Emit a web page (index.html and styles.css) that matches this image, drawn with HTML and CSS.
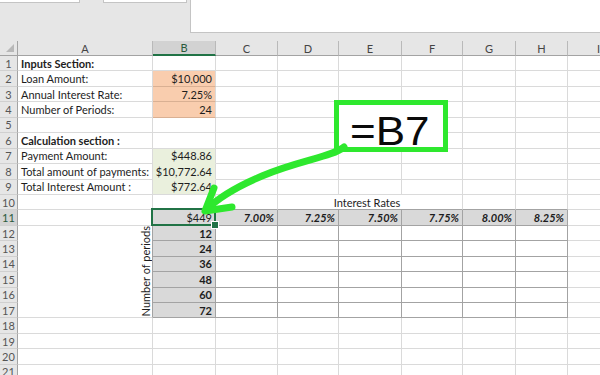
FILE: index.html
```html
<!DOCTYPE html>
<html>
<head>
<meta charset="utf-8">
<link rel="stylesheet" href="styles.css">
</head>
<body>
<div class="top">
  <div class="tools"><div class="box name"></div><div class="box fx"></div></div>
  <div class="formula"></div>
</div>
<div class="sheet">
  <div class="c h corner"><svg width="10" height="10" viewBox="0 0 10 10"><polygon points="9,1 9,9 1,9" fill="#b8b8b8"/></svg></div>
  <div class="c h">A</div><div class="c h hs">B</div><div class="c h">C</div><div class="c h">D</div><div class="c h">E</div><div class="c h">F</div><div class="c h">G</div><div class="c h">H</div><div class="c h">I</div>

  <div class="c r">1</div><div class="c b">Inputs Section:</div><div class="c"></div><div class="c"></div><div class="c"></div><div class="c"></div><div class="c"></div><div class="c"></div><div class="c"></div><div class="c"></div>
  <div class="c r">2</div><div class="c">Loan Amount:</div><div class="c n o">$10,000</div><div class="c"></div><div class="c"></div><div class="c"></div><div class="c"></div><div class="c"></div><div class="c"></div><div class="c"></div>
  <div class="c r">3</div><div class="c">Annual Interest Rate:</div><div class="c n o">7.25%</div><div class="c"></div><div class="c"></div><div class="c"></div><div class="c"></div><div class="c"></div><div class="c"></div><div class="c"></div>
  <div class="c r">4</div><div class="c">Number of Periods:</div><div class="c n o">24</div><div class="c"></div><div class="c"></div><div class="c"></div><div class="c"></div><div class="c"></div><div class="c"></div><div class="c"></div>
  <div class="c r">5</div><div class="c"></div><div class="c"></div><div class="c"></div><div class="c"></div><div class="c"></div><div class="c"></div><div class="c"></div><div class="c"></div><div class="c"></div>
  <div class="c r">6</div><div class="c b">Calculation section :</div><div class="c"></div><div class="c"></div><div class="c"></div><div class="c"></div><div class="c"></div><div class="c"></div><div class="c"></div><div class="c"></div>
  <div class="c r">7</div><div class="c">Payment Amount:</div><div class="c n gr gm">$448.86</div><div class="c"></div><div class="c"></div><div class="c"></div><div class="c"></div><div class="c"></div><div class="c"></div><div class="c"></div>
  <div class="c r">8</div><div class="c">Total amount of payments:</div><div class="c n gr gm">$10,772.64</div><div class="c"></div><div class="c"></div><div class="c"></div><div class="c"></div><div class="c"></div><div class="c"></div><div class="c"></div>
  <div class="c r">9</div><div class="c">Total Interest Amount :</div><div class="c n gr">$772.64</div><div class="c"></div><div class="c"></div><div class="c"></div><div class="c"></div><div class="c"></div><div class="c"></div><div class="c"></div>
  <div class="c r">10</div><div class="c"></div><div class="c tb"></div><div class="c tb"></div><div class="c tb span3">Interest Rates</div><div class="c tb"></div><div class="c tb"></div><div class="c"></div>
  <div class="c r rs">11</div><div class="c ta"></div><div class="c n g t sel">$449</div><div class="c n g t bi">7.00%</div><div class="c n g t bi">7.25%</div><div class="c n g t bi">7.50%</div><div class="c n g t bi">7.75%</div><div class="c n g t bi">8.00%</div><div class="c n g t bi">8.25%</div><div class="c"></div>
  <div class="c r">12</div><div class="c ta vert"><span>Number of periods</span></div><div class="c n g t b">12</div><div class="c t"></div><div class="c t"></div><div class="c t"></div><div class="c t"></div><div class="c t"></div><div class="c t"></div><div class="c"></div>
  <div class="c r">13</div><div class="c n g t b">24</div><div class="c t"></div><div class="c t"></div><div class="c t"></div><div class="c t"></div><div class="c t"></div><div class="c t"></div><div class="c"></div>
  <div class="c r">14</div><div class="c n g t b">36</div><div class="c t"></div><div class="c t"></div><div class="c t"></div><div class="c t"></div><div class="c t"></div><div class="c t"></div><div class="c"></div>
  <div class="c r">15</div><div class="c n g t b">48</div><div class="c t"></div><div class="c t"></div><div class="c t"></div><div class="c t"></div><div class="c t"></div><div class="c t"></div><div class="c"></div>
  <div class="c r">16</div><div class="c n g t b">60</div><div class="c t"></div><div class="c t"></div><div class="c t"></div><div class="c t"></div><div class="c t"></div><div class="c t"></div><div class="c"></div>
  <div class="c r">17</div><div class="c n g t b">72</div><div class="c t"></div><div class="c t"></div><div class="c t"></div><div class="c t"></div><div class="c t"></div><div class="c t"></div><div class="c"></div>
  <div class="c r">18</div><div class="c"></div><div class="c"></div><div class="c"></div><div class="c"></div><div class="c"></div><div class="c"></div><div class="c"></div><div class="c"></div><div class="c"></div>
  <div class="c r">19</div><div class="c"></div><div class="c"></div><div class="c"></div><div class="c"></div><div class="c"></div><div class="c"></div><div class="c"></div><div class="c"></div><div class="c"></div>
  <div class="c r">20</div><div class="c"></div><div class="c"></div><div class="c"></div><div class="c"></div><div class="c"></div><div class="c"></div><div class="c"></div><div class="c"></div><div class="c"></div>
  <div class="c r">21</div><div class="c"></div><div class="c"></div><div class="c"></div><div class="c"></div><div class="c"></div><div class="c"></div><div class="c"></div><div class="c"></div><div class="c"></div>
</div>
<div class="callout"><span>=B7</span></div>
<svg class="arrow" width="600" height="375" viewBox="0 0 600 375">
  <path d="M344 147 C 332 157, 300 160, 262 176 C 236 187, 218 198, 206 210" fill="none" stroke="#2ee82e" stroke-width="7" stroke-linecap="round"/>
  <path d="M214 188 L205 211 L232 207" fill="none" stroke="#2ee82e" stroke-width="7" stroke-linecap="round" stroke-linejoin="round"/>
</svg>
</body>
</html>
```
FILE: styles.css
```css
* { box-sizing: border-box; }
html, body { margin: 0; padding: 0; }
body {
  width: 600px;
  height: 375px;
  overflow: hidden;
  position: relative;
  background: #fff;
  font-family: Lato, "Liberation Sans", sans-serif;
  font-size: 11px;
  color: #1d1d1d;
}
.top { display: flex; height: 41px; background: #e6e6e6; }
.tools { width: 190px; display: flex; gap: 23px; align-items: flex-start; }
.box { height: 3px; background: #fff; border: 1px solid #c4c4c4; border-top: 0; }
.box.name { width: 81px; margin-left: -1px; }
.box.fx { width: 84px; }
.formula { flex: 1; height: 33px; background: #fff; border-left: 1px solid #c4c4c4; border-bottom: 1px solid #c4c4c4; }

.sheet {
  display: grid;
  grid-template-columns: 18px 135px 63px 62px 61px 63px 61px 53px 52px 62px;
  grid-template-rows: 15px;
  grid-auto-rows: 15.45px;
  width: 630px;
}
.c {
  display: flex;
  align-items: center;
  padding: 0 3px;
  white-space: nowrap;
  line-height: 1;
  border-right: 1px solid #dadada;
  border-bottom: 1px solid #dadada;
  min-width: 0;
}
.h {
  background: #e6e6e6;
  justify-content: center;
  color: #444;
  border-right: 1px solid #b9b9b9;
  border-bottom: 1px solid #a3a3a3;
}
.corner { justify-content: flex-end; align-items: flex-end; padding: 0 2px 2px 0; border-right-color: #a3a3a3; }
.hs { background: #d2d2d2; border-bottom: 2px solid #217346; color: #2a5a3c; }
.r {
  background: #e6e6e6;
  justify-content: center;
  color: #555;
  padding: 0;
  border-right: 1px solid #a3a3a3;
  border-bottom: 1px solid #d0d0d0;
}
.rs { background: #d4d4d4; color: #2a5a3c; }
.b { font-weight: 700; }
.bi { font-weight: 700; font-style: italic; }
.n { justify-content: flex-end; }
.o { background: #f9cdae; border-bottom-color: #d9b093; }
.gr { background: #eaf0dd; }
.gm { border-bottom-color: #eaf0dd; }
.g { background: #d9d9d9; }
.t { border-right-color: #a3a3a3; border-bottom-color: #a3a3a3; }
.tb { border-bottom-color: #a3a3a3; }
.ta { border-right-color: #a3a3a3; }
.span3 { grid-column: span 3; justify-content: center; padding-right: 9px; overflow: visible; }
.vert { grid-row: span 6; justify-content: flex-end; padding: 0 1px 0 0; }
.vert span { writing-mode: vertical-rl; transform: rotate(180deg); }
.sel { position: relative; }
.sel::after {
  content: "";
  position: absolute;
  left: -2px; top: -2px; right: -1px; bottom: -1px;
  border: 2px solid #217346;
}
.sel::before {
  content: "";
  position: absolute;
  right: -4px; bottom: -4px;
  width: 6px; height: 6px;
  background: #217346;
  border: 1px solid #fff;
  z-index: 2;
}
.callout {
  position: absolute;
  left: 334px; top: 100px;
  width: 114px; height: 52px;
  border: 5px solid #2ee82e;
  background: #fff;
  font-family: "Liberation Sans", Arial, sans-serif;
  font-size: 40px;
  line-height: 42px;
  color: #0a0a0a;
  padding: 5px 0 0 11px;
  white-space: nowrap;
}
.callout span { display: inline-block; transform: scaleX(1.1); transform-origin: left center; }
.arrow { position: absolute; left: 0; top: 0; }
```
